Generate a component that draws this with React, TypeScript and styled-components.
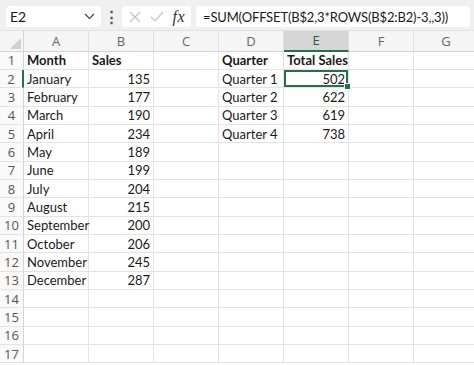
import React from 'react';
import styled, { createGlobalStyle } from 'styled-components';

const GlobalStyle = createGlobalStyle`
  html, body {
    margin: 0;
    padding: 0;
    background: #ffffff;
    overflow: hidden;
  }
  body {
    font-family: Lato, "Open Sans", sans-serif;
  }
`;

const colors = {
  toolbar: '#f0f0f0',
  header: '#f5f5f5',
  headerActive: '#d6d6d6',
  grid: '#e3e3e3',
  green: '#217346',
  text: '#1a1a1a',
  muted: '#555555',
};

const Sheet = styled.div`
  width: 474px;
  height: 365px;
  overflow: hidden;
  background: #fff;
`;

const Toolbar = styled.div`
  height: 31px;
  box-sizing: border-box;
  background: ${colors.toolbar};
  border-bottom: 1px solid #e2e2e2;
  display: flex;
  align-items: flex-start;
  padding: 6px 4px 0 6px;
`;

const Field = styled.div`
  height: 21px;
  box-sizing: border-box;
  background: #fff;
  border-radius: 4px;
  display: flex;
  align-items: center;
  font-size: 14px;
  color: ${colors.text};
`;

const NameBox = styled(Field)`
  width: 95px;
  padding: 0 6px 0 4px;
  justify-content: space-between;
`;

const Grip = styled.div`
  width: 21px;
  height: 21px;
  display: flex;
  align-items: center;
  justify-content: center;
  color: #555;
  font-size: 15px;
  font-weight: bold;
`;

const FuncBox = styled(Field)`
  width: 69px;
  padding: 0 6px 0 7px;
  justify-content: space-between;
`;

const Fx = styled.span`
  font-family: "Liberation Serif", "DejaVu Serif", serif;
  font-style: italic;
  font-size: 16px;
  color: #333;
  letter-spacing: 0.5px;
`;

const FormulaBox = styled(Field)`
  flex: 1;
  min-width: 0;
  margin-left: 5px;
  padding-left: 7px;
  font-size: 13px;
  letter-spacing: -0.15px;
  white-space: nowrap;
  overflow: hidden;
`;

const Grid = styled.div`
  display: grid;
  grid-template-columns: 24px repeat(7, 65px);
  grid-template-rows: 20.5px repeat(17, 18.35px);
`;

const Corner = styled.div`
  position: relative;
  background: ${colors.header};
  border-right: 1px solid #d4d4d4;
  border-bottom: 1px solid #d4d4d4;
  box-sizing: border-box;

  &::after {
    content: '';
    position: absolute;
    right: 2px;
    bottom: 2px;
    width: 0;
    height: 0;
    border-left: 11px solid transparent;
    border-bottom: 11px solid #d0d0d0;
  }
`;

const ColHead = styled.div<{ $active?: boolean }>`
  background: ${(p) => (p.$active ? colors.headerActive : colors.header)};
  border-right: 1px solid #e0e0e0;
  border-bottom: ${(p) => (p.$active ? `2px solid ${colors.green}` : '1px solid #d4d4d4')};
  box-sizing: border-box;
  display: flex;
  align-items: center;
  justify-content: center;
  font-family: "Open Sans", sans-serif;
  font-size: 13px;
  color: ${(p) => (p.$active ? '#2a5d3f' : '#666')};
`;

const RowHead = styled.div<{ $active?: boolean }>`
  background: #fafafa;
  border-right: ${(p) => (p.$active ? `2px solid ${colors.green}` : '1px solid #d4d4d4')};
  border-bottom: 1px solid ${colors.grid};
  box-sizing: border-box;
  display: flex;
  align-items: center;
  justify-content: center;
  font-family: "Open Sans", sans-serif;
  font-size: 13px;
  color: ${colors.muted};
`;

const Cell = styled.div<{ $num?: boolean; $bold?: boolean; $selected?: boolean }>`
  position: relative;
  box-sizing: border-box;
  border-right: 1px solid ${colors.grid};
  border-bottom: 1px solid ${colors.grid};
  padding: 0 3px;
  display: flex;
  align-items: center;
  justify-content: ${(p) => (p.$num ? 'flex-end' : 'flex-start')};
  font-size: 13px;
  font-weight: ${(p) => (p.$bold ? 700 : 400)};
  color: ${colors.text};
  white-space: nowrap;
  ${(p) =>
    p.$selected &&
    `
    box-shadow: inset 0 0 0 2px ${colors.green};
    &::after {
      content: '';
      position: absolute;
      right: -3px;
      bottom: -3px;
      width: 5px;
      height: 5px;
      background: ${colors.green};
      border: 1px solid #fff;
      z-index: 2;
    }
  `}
`;

type CellValue = string | number | null;

const rows: CellValue[][] = [
  ['Month', 'Sales', null, 'Quarter', 'Total Sales', null, null],
  ['January', 135, null, 'Quarter 1', 502, null, null],
  ['February', 177, null, 'Quarter 2', 622, null, null],
  ['March', 190, null, 'Quarter 3', 619, null, null],
  ['April', 234, null, 'Quarter 4', 738, null, null],
  ['May', 189, null, null, null, null, null],
  ['June', 199, null, null, null, null, null],
  ['July', 204, null, null, null, null, null],
  ['August', 215, null, null, null, null, null],
  ['September', 200, null, null, null, null, null],
  ['October', 206, null, null, null, null, null],
  ['November', 245, null, null, null, null, null],
  ['December', 287, null, null, null, null, null],
  [null, null, null, null, null, null, null],
  [null, null, null, null, null, null, null],
  [null, null, null, null, null, null, null],
  [null, null, null, null, null, null, null],
];

const columns = ['A', 'B', 'C', 'D', 'E', 'F', 'G'];

const Chevron = () => (
  <svg width="11" height="7" viewBox="0 0 11 7" fill="none">
    <path d="M1 1l4.5 4.5L10 1" stroke="#444" strokeWidth="1.2" />
  </svg>
);

const Cross = () => (
  <svg width="12" height="12" viewBox="0 0 12 12" fill="none">
    <path d="M1 1l10 10M11 1L1 11" stroke="#c4c4c4" strokeWidth="1.2" />
  </svg>
);

const Check = () => (
  <svg width="14" height="11" viewBox="0 0 14 11" fill="none">
    <path d="M1 6l4 4 8-9" stroke="#c4c4c4" strokeWidth="1.2" />
  </svg>
);

const App = () => (
  <Sheet>
    <GlobalStyle />
    <Toolbar>
      <NameBox>
        <span>E2</span>
        <Chevron />
      </NameBox>
      <Grip>⋮</Grip>
      <FuncBox>
        <Cross />
        <Check />
        <Fx>fx</Fx>
      </FuncBox>
      <FormulaBox>=SUM(OFFSET(B$2,3*ROWS(B$2:B2)-3,,3))</FormulaBox>
    </Toolbar>
    <Grid>
      <Corner />
      {columns.map((c) => (
        <ColHead key={c} $active={c === 'E'}>
          {c}
        </ColHead>
      ))}
      {rows.map((row, r) => (
        <React.Fragment key={r}>
          <RowHead $active={r === 1}>{r + 1}</RowHead>
          {row.map((v, c) => (
            <Cell
              key={c}
              $num={typeof v === 'number'}
              $bold={r === 0}
              $selected={r === 1 && c === 4}
            >
              {v}
            </Cell>
          ))}
        </React.Fragment>
      ))}
    </Grid>
  </Sheet>
);

export default App;
